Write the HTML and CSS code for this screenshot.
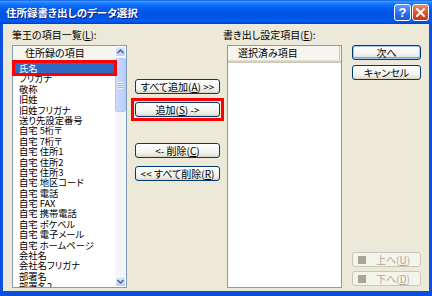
FILE: index.html
```html
<!DOCTYPE html>
<html lang="ja">
<head>
    <meta charset="UTF-8">
    <title>住所録書き出しのデータ選択</title>
    <link rel="stylesheet" href="styles.css">
</head>
<body>
<div class="window">
    <div class="titlebar">
        <span class="title">住所録書き出しのデータ選択</span>
        <div class="caption-buttons">
            <span class="cap-btn help">?</span>
            <span class="cap-btn close">
                <svg width="9" height="9" viewBox="0 0 9 9"><path d="M1 1 L8 8 M8 1 L1 8" stroke="#fff" stroke-width="2" stroke-linecap="square"/></svg>
            </span>
        </div>
    </div>
    <div class="client">
        <div class="col col-source">
            <div class="label">筆王の項目一覧(<u>L</u>):</div>
            <div class="list">
                <div class="list-main">
                    <div class="list-header"><span>住所録の項目</span></div>
                    <div class="rows">
                        <div class="row selected">氏名</div>
                        <div class="row">フリガナ</div>
                        <div class="row">敬称</div>
                        <div class="row">旧姓</div>
                        <div class="row">旧姓フリガナ</div>
                        <div class="row">送り先設定番号</div>
                        <div class="row">自宅 5桁〒</div>
                        <div class="row">自宅 7桁〒</div>
                        <div class="row">自宅 住所1</div>
                        <div class="row">自宅 住所2</div>
                        <div class="row">自宅 住所3</div>
                        <div class="row">自宅 地区コード</div>
                        <div class="row">自宅 電話</div>
                        <div class="row">自宅 FAX</div>
                        <div class="row">自宅 携帯電話</div>
                        <div class="row">自宅 ポケベル</div>
                        <div class="row">自宅 電子メール</div>
                        <div class="row">自宅 ホームページ</div>
                        <div class="row">会社名</div>
                        <div class="row">会社名フリガナ</div>
                        <div class="row">部署名</div>
                        <div class="row">部署名2</div>
                    </div>
                </div>
                <div class="scrollbar">
                    <div class="sb-btn">
                        <svg width="7" height="5" viewBox="0 0 7 5"><path d="M0.5 4 L3.5 1 L6.5 4" fill="none" stroke="#4D6185" stroke-width="1.5"/></svg>
                    </div>
                    <div class="sb-track">
                        <div class="sb-thumb"><span class="grip"></span></div>
                    </div>
                    <div class="sb-btn">
                        <svg width="7" height="5" viewBox="0 0 7 5"><path d="M0.5 1 L3.5 4 L6.5 1" fill="none" stroke="#4D6185" stroke-width="1.5"/></svg>
                    </div>
                </div>
                <div class="mark"></div>
            </div>
        </div>

        <div class="col col-move">
            <button class="btn">すべて追加(<u>A</u>) &gt;&gt;</button>
            <div class="mark-box">
                <button class="btn">追加(<u>S</u>) -&gt;</button>
            </div>
            <button class="btn">&lt;- 削除(<u>C</u>)</button>
            <button class="btn last">&lt;&lt; すべて削除(<u>R</u>)</button>
        </div>

        <div class="col col-target">
            <div class="label">書き出し設定項目(<u>E</u>):</div>
            <div class="list target">
                <div class="list-main">
                    <div class="list-header"><span class="cell">選択済み項目</span></div>
                </div>
            </div>
        </div>

        <div class="col col-actions">
            <button class="btn default">次へ</button>
            <button class="btn cancel">キャンセル</button>
            <button class="btn disabled move-up"><i class="sq"></i><span>上へ(<u>U</u>)</span></button>
            <button class="btn disabled move-down"><i class="sq"></i><span>下へ(<u>D</u>)</span></button>
        </div>
    </div>
</div>
</body>
</html>
```

FILE: styles.css
```css
body {
    margin: 0;
    font-family: "Noto Sans CJK JP", "Liberation Sans", sans-serif;
    font-size: 10px;
    font-feature-settings: "palt";
    color: #000;
}
.window {
    width: 432px;
    height: 296px;
    display: flex;
    flex-direction: column;
    background: #0A4FDE;
}

/* title bar */
.titlebar {
    flex: none;
    height: 24px;
    display: flex;
    align-items: center;
    padding: 0 3px 0 6px;
    background: linear-gradient(to bottom, #0A5FEA 0, #3D95FF 6%, #1A7BFF 14%, #0563F3 30%, #0055E5 50%, #0054E3 70%, #005CF5 85%, #0050D8 95%, #003FA8 100%);
}
.title {
    flex: 1;
    color: #fff;
    font-weight: bold;
    font-size: 10.5px;
    text-shadow: 1px 1px 0 #0F1E8C;
    white-space: nowrap;
}
.caption-buttons {
    display: flex;
    gap: 1px;
}
.cap-btn {
    width: 17px;
    height: 17px;
    box-sizing: border-box;
    border: 1px solid #fff;
    border-radius: 3px;
    display: flex;
    align-items: center;
    justify-content: center;
    color: #fff;
    font-family: "Liberation Sans", sans-serif;
    font-weight: bold;
    font-size: 13px;
}
.help {
    background: linear-gradient(to bottom, #5C9BFF, #2C6BEF 60%, #1E5AD8);
}
.close {
    background: linear-gradient(to bottom, #EB8C6E, #D8522E 55%, #C03A16);
}

/* dialog body */
.client {
    flex: 1;
    margin: 0 3px 5px;
    background: #ECE9D8;
    display: flex;
    padding: 5px 0 3px 9px;
    min-height: 0;
}
.col {
    display: flex;
    flex-direction: column;
}
.col-source {
    width: 115px;
    margin-right: 8px;
}
.col-move {
    width: 85px;
    margin-right: 3px;
    padding-top: 50px;
}
.col-target {
    width: 119px;
    margin-right: 10px;
}
.col-actions {
    width: 69px;
    padding-top: 16px;
}
.label {
    height: 12px;
    line-height: 12px;
    margin-bottom: 4px;
    white-space: nowrap;
}

/* list views */
.list {
    flex: 1;
    min-height: 0;
    border: 1px solid #7F9DB9;
    background: #fff;
    display: flex;
    position: relative;
}
.target {
    margin-left: 4px;
}
.list-main {
    flex: 1;
    min-width: 0;
    overflow: hidden;
}
.list-header {
    height: 17px;
    box-sizing: border-box;
    line-height: 14px;
    padding-left: 12px;
    white-space: nowrap;
    background: linear-gradient(to bottom, #F6F5EF 0, #F6F5EF 14px, #E2DECD 14px, #E2DECD 15px, #D6D2C2 15px, #D6D2C2 16px, #CBC7B8 16px);
}
.target .list-header {
    padding-left: 10px;
}
.target .cell {
    display: inline-block;
    width: 101px;
    height: 14px;
    border-right: 1px solid #C7C5B2;
}
.row {
    height: 10.4px;
    line-height: 10.4px;
    font-size: 9.3px;
    padding-left: 6px;
    white-space: nowrap;
}
.selected {
    background: #316AC5;
    color: #fff;
}
.mark {
    position: absolute;
    left: -1px;
    top: 14px;
    width: 105px;
    height: 16px;
    box-sizing: border-box;
    border: 3px solid #FF0000;
}

/* scrollbar */
.scrollbar {
    flex: none;
    width: 11px;
    display: flex;
    flex-direction: column;
    background: #F4F5FA;
}
.sb-btn {
    height: 11px;
    box-sizing: border-box;
    border: 1px solid #fff;
    border-radius: 2px;
    background: linear-gradient(to bottom, #DDE8FE, #BCD0F9);
    display: flex;
    align-items: center;
    justify-content: center;
}
.sb-track {
    flex: 1;
}
.sb-thumb {
    height: 54px;
    margin-top: 1px;
    box-sizing: border-box;
    border: 1px solid #B4C8F6;
    border-radius: 2px;
    background: linear-gradient(to right, #CCDBFD, #B8CDFA);
    display: flex;
    align-items: center;
    justify-content: center;
}
.grip {
    width: 5px;
    height: 7px;
    background: repeating-linear-gradient(to bottom, #EEF4FE 0, #EEF4FE 1px, #8CB0F8 1px, #8CB0F8 2px);
}

/* buttons */
.btn {
    height: 15px;
    width: 100%;
    box-sizing: border-box;
    padding: 0;
    border: 1px solid #003C74;
    border-radius: 3px;
    background: linear-gradient(to bottom, #FFFFFF, #F4F4F0 60%, #E6E4DA 88%, #D6D0C5);
    font: inherit;
    line-height: 13px;
    color: #000;
    display: flex;
    align-items: center;
    justify-content: center;
    white-space: nowrap;
}
.mark-box {
    border: 3px solid #FF0000;
    padding: 1px;
    margin: 4px -4px 22px;
}
.last {
    margin-top: 8px;
}
.default {
    box-shadow: inset 0 0 0 1px #A7C3F4, inset 0 -1px 0 1px #7D9FE4;
}
.cancel {
    margin-top: 5px;
}
.disabled {
    border-color: #C9C7BA;
    background: #F5F4EA;
    color: #ACA899;
    justify-content: flex-start;
}
.disabled span {
    flex: 1;
    text-align: center;
}
.sq {
    width: 8px;
    height: 8px;
    margin-left: 5px;
    background: #A9A695;
}
.move-up {
    margin-top: auto;
}
.move-down {
    margin-top: 4px;
    margin-bottom: 2px;
}
```
